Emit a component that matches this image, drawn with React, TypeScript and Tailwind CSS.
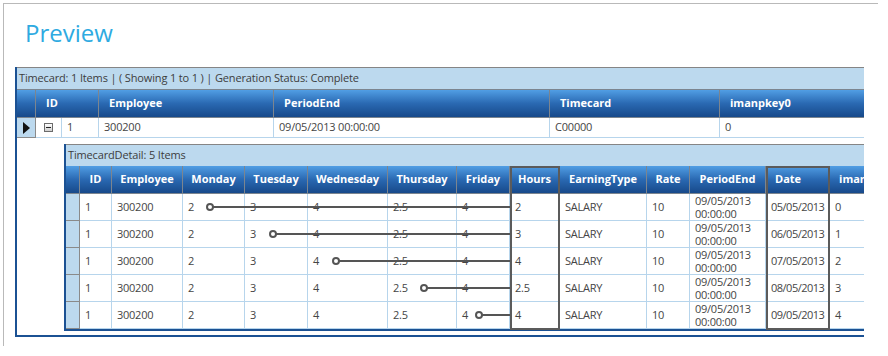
const topCols = 'grid grid-cols-[19px_26px_37px_175px_276px_170px_150px]';
const detailCols =
  'grid grid-cols-[14px_32px_71px_62px_63px_80px_69px_53px_50px_87px_43px_76px_64px_80px]';

const headerBar =
  'bg-linear-to-b from-[#519ee4] via-[#2a69b2] to-[#17498a] border-t border-b border-[#7c858f]';
const caption =
  'bg-[#bcd9ee] border-t border-[#858585] flex items-center text-[11px] tracking-[-0.15px] text-[#3d3d3d]';

const details = [
  { hours: '2', date: '05/05/2013', key: '0' },
  { hours: '3', date: '06/05/2013', key: '1' },
  { hours: '4', date: '07/05/2013', key: '2' },
  { hours: '2.5', date: '08/05/2013', key: '3' },
  { hours: '4', date: '09/05/2013', key: '4' },
];

// where each row's marker starts (x inside the detail grid)
const marks = [144, 207, 270, 358, 413];

const TopGrid = () => {
  const cell = 'border-r border-b border-[#b7d5ec] flex items-center pl-[5px] truncate';
  return (
    <div className="ml-[11px] w-[849px] overflow-hidden border-l-2 border-b-2 border-[#1b5193]">
      <div className={`${caption} h-[22px] w-[848px] pl-[2px]`}>
        Timecard: 1 Items | ( Showing 1 to 1 ) | Generation Status: Complete
      </div>
      <div className={`${topCols} ${headerBar} h-[29px] w-max text-[11px] font-bold text-white`}>
        <div className="border-r border-[#7c858f]" />
        <div className="col-span-2 border-r border-[#7c858f] flex items-center pl-[10px]">ID</div>
        <div className="border-r border-[#7c858f] flex items-center pl-[10px]">Employee</div>
        <div className="border-r border-[#7c858f] flex items-center pl-[10px]">PeriodEnd</div>
        <div className="border-r border-[#7c858f] flex items-center pl-[10px]">Timecard</div>
        <div className="flex items-center pl-[10px]">imanpkey0</div>
      </div>
      <div className={`${topCols} h-[20px] w-max text-[11px] tracking-[-0.2px] text-[#454545]`}>
        <div className="bg-[#bcd9ee] border-r border-b border-[#8a8a8a] flex items-center justify-center">
          <svg width="7" height="12" viewBox="0 0 7 12">
            <polygon points="0,0 7,6 0,12" fill="#111" />
          </svg>
        </div>
        <div className="border-r border-b border-[#b7d5ec] flex items-center pl-[8px]">
          <div className="w-[9px] h-[9px] border border-[#6b6b6b] bg-linear-to-b from-white to-[#cfcfcf] flex items-center justify-center">
            <div className="w-[5px] h-[1px] bg-[#222]" />
          </div>
        </div>
        <div className={cell}>1</div>
        <div className={`${cell} pl-[2px]`}>300200</div>
        <div className={cell}>09/05/2013 00:00:00</div>
        <div className={cell}>C00000</div>
        <div className={cell}>0</div>
      </div>
      <div className="h-[197px] pt-[6px]">
        <DetailGrid />
      </div>
    </div>
  );
};

const DetailGrid = () => {
  const head = 'border-r border-[#7c858f] flex items-center justify-center';
  const cell = 'border-r border-b border-[#b7d5ec] flex items-center pl-[5px] whitespace-nowrap';
  return (
    <div className="relative ml-[47px] w-max border-l-2 border-b-2 border-[#1b5193]">
      <div className={`${caption} h-[22px] pl-[2px]`}>TimecardDetail: 5 Items</div>
      <div className={`${detailCols} ${headerBar} border-t-0 h-[28px] text-[11px] font-bold text-white`}>
        <div className="border-r border-[#7c858f]" />
        <div className={head}>ID</div>
        <div className={head}>Employee</div>
        <div className={head}>Monday</div>
        <div className={head}>Tuesday</div>
        <div className={head}>Wednesday</div>
        <div className={head}>Thursday</div>
        <div className={head}>Friday</div>
        <div className={head}>Hours</div>
        <div className={head}>EarningType</div>
        <div className={head}>Rate</div>
        <div className={head}>PeriodEnd</div>
        <div className="border-r border-[#7c858f] flex items-center pl-[9px]">Date</div>
        <div className={head}>imanpkey0</div>
      </div>
      {details.map((d, i) => (
        <div
          key={i}
          className={`${detailCols} h-[27px] text-[11px] tracking-[-0.25px] text-[#454545]`}
        >
          <div className="bg-[#bcd9ee] border-r border-b border-[#8a8a8a]" />
          <div className={cell}>1</div>
          <div className={cell}>300200</div>
          <div className={cell}>2</div>
          <div className={cell}>3</div>
          <div className={cell}>4</div>
          <div className={cell}>2.5</div>
          <div className={cell}>4</div>
          <div className={`${cell} pl-[4px]`}>{d.hours}</div>
          <div className={cell}>SALARY</div>
          <div className={cell}>10</div>
          <div className="border-r border-b border-[#b7d5ec] flex flex-col justify-center pl-[5px] leading-[13px]">
            <span>09/05/2013</span>
            <span>00:00:00</span>
          </div>
          <div className={`${cell} pl-[4px] tracking-[-0.5px]`}>{d.date}</div>
          <div className={cell}>{d.key}</div>
        </div>
      ))}

      <div className="absolute left-[444px] top-[22px] w-[50px] h-[164px] border-2 border-[#5b5b5b]" />
      <div className="absolute left-[700px] top-[22px] w-[64px] h-[164px] border-2 border-[#5b5b5b]" />
      <svg className="absolute left-0 top-0 pointer-events-none" width="760" height="187">
        {marks.map((x, i) => {
          const y = 63 + 27 * i;
          return (
            <g key={i}>
              <line x1={x + 3} y1={y} x2={444} y2={y} stroke="#555" strokeWidth="2" />
              <circle cx={x} cy={y} r="3" fill="#fff" stroke="#555" strokeWidth="2" />
            </g>
          );
        })}
      </svg>
    </div>
  );
};

export default function App() {
  return (
    <div className="w-[888px] h-[356px] overflow-hidden bg-white pt-[3px] pl-[3px] font-['Open_Sans',sans-serif]">
      <div className="w-[875px] h-[343px] border-l border-t border-[#b9b9b9]">
        <h1 className="pl-[21px] pt-[13px] h-[63px] text-[24px] leading-[32px] text-[#2eaae1]">
          Preview
        </h1>
        <TopGrid />
      </div>
    </div>
  );
}
